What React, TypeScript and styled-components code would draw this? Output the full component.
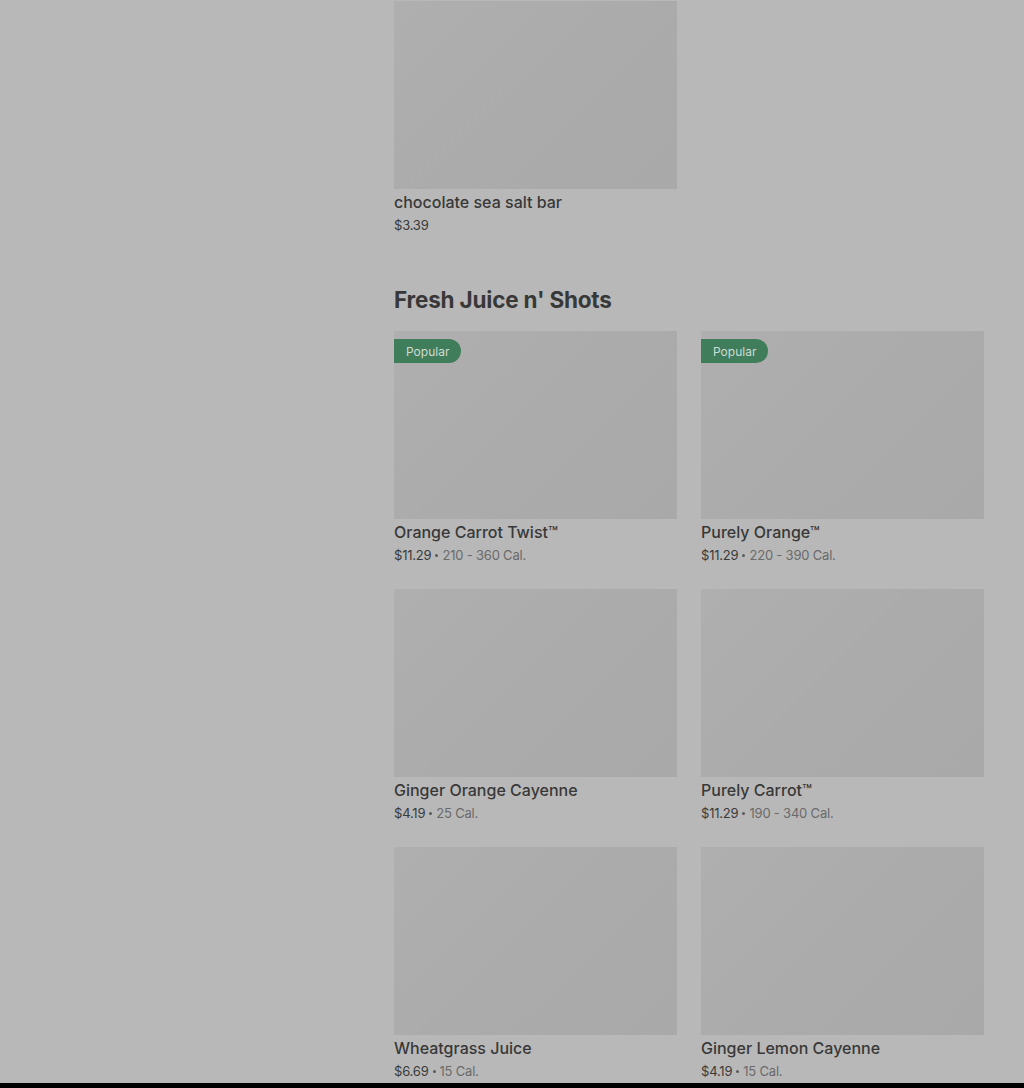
import React from "react";
import styled, { createGlobalStyle } from "styled-components";

const Global = createGlobalStyle`
  html, body { margin: 0; padding: 0; background: #b8b8b8; }
  body { font-family: Inter, "Noto Sans", "Liberation Sans", sans-serif; }
`;

const Page = styled.div`
  width: 1024px;
  height: 1088px;
  display: flex;
  flex-direction: column;
  overflow: hidden;
  background: #b8b8b8;
`;

const Main = styled.main`
  flex: 1;
  overflow: hidden;
  padding: 1px 40px 0 394px;
`;

const BottomBar = styled.div`
  height: 5px;
  background: #000;
  flex-shrink: 0;
`;

const Grid = styled.div`
  display: grid;
  grid-template-columns: 283px 283px;
  column-gap: 24px;
  row-gap: 24px;
`;

const Card = styled.div`
  display: flex;
  flex-direction: column;
`;

const Thumb = styled.div`
  position: relative;
  height: 188px;
  background: linear-gradient(135deg, #afafaf 0%, #ababab 50%, #a9a9a9 100%);
`;

const Badge = styled.span`
  position: absolute;
  top: 8px;
  left: 0;
  height: 24px;
  padding: 0 12px;
  display: flex;
  align-items: center;
  background: #3f7d5b;
  color: #cfdcd3;
  font-size: 12px;
  border-radius: 0 12px 12px 0;
`;

const Title = styled.div`
  margin-top: 3px;
  font-size: 16px;
  line-height: 20px;
  font-weight: 500;
  color: #383838;
`;

const Meta = styled.div`
  margin-top: 3px;
  height: 20px;
  display: flex;
  align-items: center;
  gap: 4px;
  font-size: 13px;
  line-height: 20px;
  letter-spacing: -0.2px;
  color: #3a3a3a;
`;

const Cal = styled.span`
  color: #6a6a6a;
`;

const Dot = styled.span`
  width: 3px;
  height: 3px;
  border-radius: 50%;
  background: #5a5a5a;
`;

const Heading = styled.h2`
  margin: 48px 0 15px;
  font-size: 22.5px;
  line-height: 33px;
  font-weight: 700;
  color: #383838;
  letter-spacing: -0.2px;
`;

type Item = { name: string; price: string; cal?: string; popular?: boolean };

const juices: Item[] = [
  { name: "Orange Carrot Twist™", price: "$11.29", cal: "210 - 360 Cal.", popular: true },
  { name: "Purely Orange™", price: "$11.29", cal: "220 - 390 Cal.", popular: true },
  { name: "Ginger Orange Cayenne", price: "$4.19", cal: "25 Cal." },
  { name: "Purely Carrot™", price: "$11.29", cal: "190 - 340 Cal." },
  { name: "Wheatgrass Juice", price: "$6.69", cal: "15 Cal." },
  { name: "Ginger Lemon Cayenne", price: "$4.19", cal: "15 Cal." },
];

const ItemCard = ({ item }: { item: Item }) => (
  <Card>
    <Thumb>{item.popular && <Badge>Popular</Badge>}</Thumb>
    <Title>{item.name}</Title>
    <Meta>
      <span>{item.price}</span>
      {item.cal && (
        <>
          <Dot />
          <Cal>{item.cal}</Cal>
        </>
      )}
    </Meta>
  </Card>
);

export default function App() {
  return (
    <Page>
      <Global />
      <Main>
        <Grid>
          <ItemCard item={{ name: "chocolate sea salt bar", price: "$3.39" }} />
        </Grid>
        <Heading>Fresh Juice n' Shots</Heading>
        <Grid>
          {juices.map((j) => (
            <ItemCard key={j.name} item={j} />
          ))}
        </Grid>
      </Main>
      <BottomBar />
    </Page>
  );
}
